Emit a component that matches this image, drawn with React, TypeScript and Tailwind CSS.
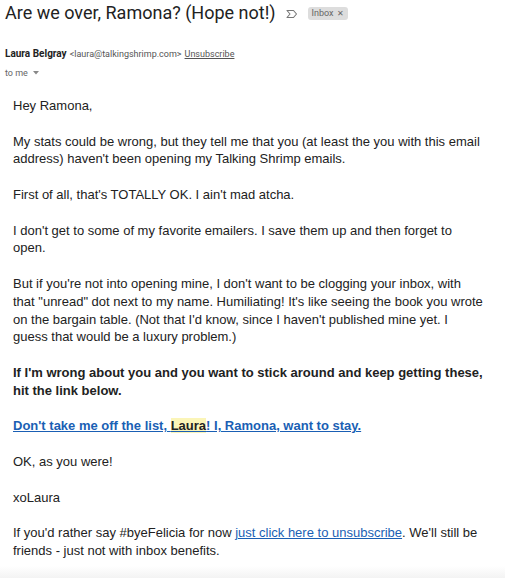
import React from 'react';

const ImportanceIcon = () => (
  <svg width="12" height="10" viewBox="0 0 12 10" fill="none" className="shrink-0">
    <path d="M1 1.5h6.5L10.5 5 7.5 8.5H1L4 5z" stroke="#777" strokeWidth="1.1" strokeLinejoin="round" />
  </svg>
);

export default function App() {
  return (
    <div className="relative h-[578px] w-[505px] overflow-hidden bg-white">
      {/* header */}
      <div className="flex items-center pl-[5px] pt-[1px] font-['Roboto',sans-serif]">
        <h1 className="text-[18px] leading-[24px] text-[#222]">Are we over, Ramona? (Hope not!)</h1>
        <span className="ml-[10px] mt-[1px]">
          <ImportanceIcon />
        </span>
        <span className="ml-[10px] mt-[1px] flex h-[13px] items-center gap-[3px] rounded-[3px] bg-[#dddddd] px-[4px] text-[9px] text-[#666]">
          Inbox <span className="text-[8px]">✕</span>
        </span>
      </div>

      <div className="mt-[22px] pl-[5px] font-['Roboto',sans-serif] text-[10px] leading-[14px]">
        <div className="flex items-baseline gap-[3px]">
          <span className="font-bold text-[#222]">Laura Belgray</span>
          <span className="text-[9px] text-[#555]">&lt;laura@talkingshrimp.com&gt;</span>
          <span className="text-[9px] text-[#555] underline">Unsubscribe</span>
        </div>
        <div className="mt-[5px] flex items-center gap-[5px] text-[9px] text-[#666]">
          to me
          <svg width="6" height="4" viewBox="0 0 6 4">
            <path d="M0 0h6L3 3.5z" fill="#888" />
          </svg>
        </div>
      </div>

      {/* body */}
      <div className="mt-[17px] w-[500px] pl-[13px] font-['Liberation_Sans',Arial,sans-serif] text-[13px] leading-[17.8px] text-[#222] [&>p]:mb-[17.8px]">
        <p>Hey Ramona,</p>
        <p>
          My stats could be wrong, but they tell me that you (at least the you with this email
          <br />
          address) haven't been opening my Talking Shrimp emails.
        </p>
        <p>First of all, that's TOTALLY OK. I ain't mad atcha.</p>
        <p>
          I don't get to some of my favorite emailers. I save them up and then forget to
          <br />
          open.
        </p>
        <p>
          But if you're not into opening mine, I don't want to be clogging your inbox, with
          <br />
          that "unread" dot next to my name. Humiliating! It's like seeing the book you wrote
          <br />
          on the bargain table. (Not that I'd know, since I haven't published mine yet. I
          <br />
          guess that would be a luxury problem.)
        </p>
        <p className="font-bold">
          If I'm wrong about you and you want to stick around and keep getting these,
          <br />
          hit the link below.
        </p>
        <p className="font-bold text-[#1a5fb4] underline">
          Don't take me off the list, <span className="bg-[#fbf5b8] text-[#222]">Laura</span>! I, Ramona, want to stay.
        </p>
        <p>OK, as you were!</p>
        <p>xoLaura</p>
        <p>
          If you'd rather say #byeFelicia for now{' '}
          <span className="text-[#1a5fb4] underline">just click here to unsubscribe</span>. We'll still be
          <br />
          friends - just not with inbox benefits.
        </p>
      </div>

      <div className="absolute bottom-0 left-0 h-[12px] w-full bg-gradient-to-b from-white to-[#f3f3f3]" />
    </div>
  );
}
